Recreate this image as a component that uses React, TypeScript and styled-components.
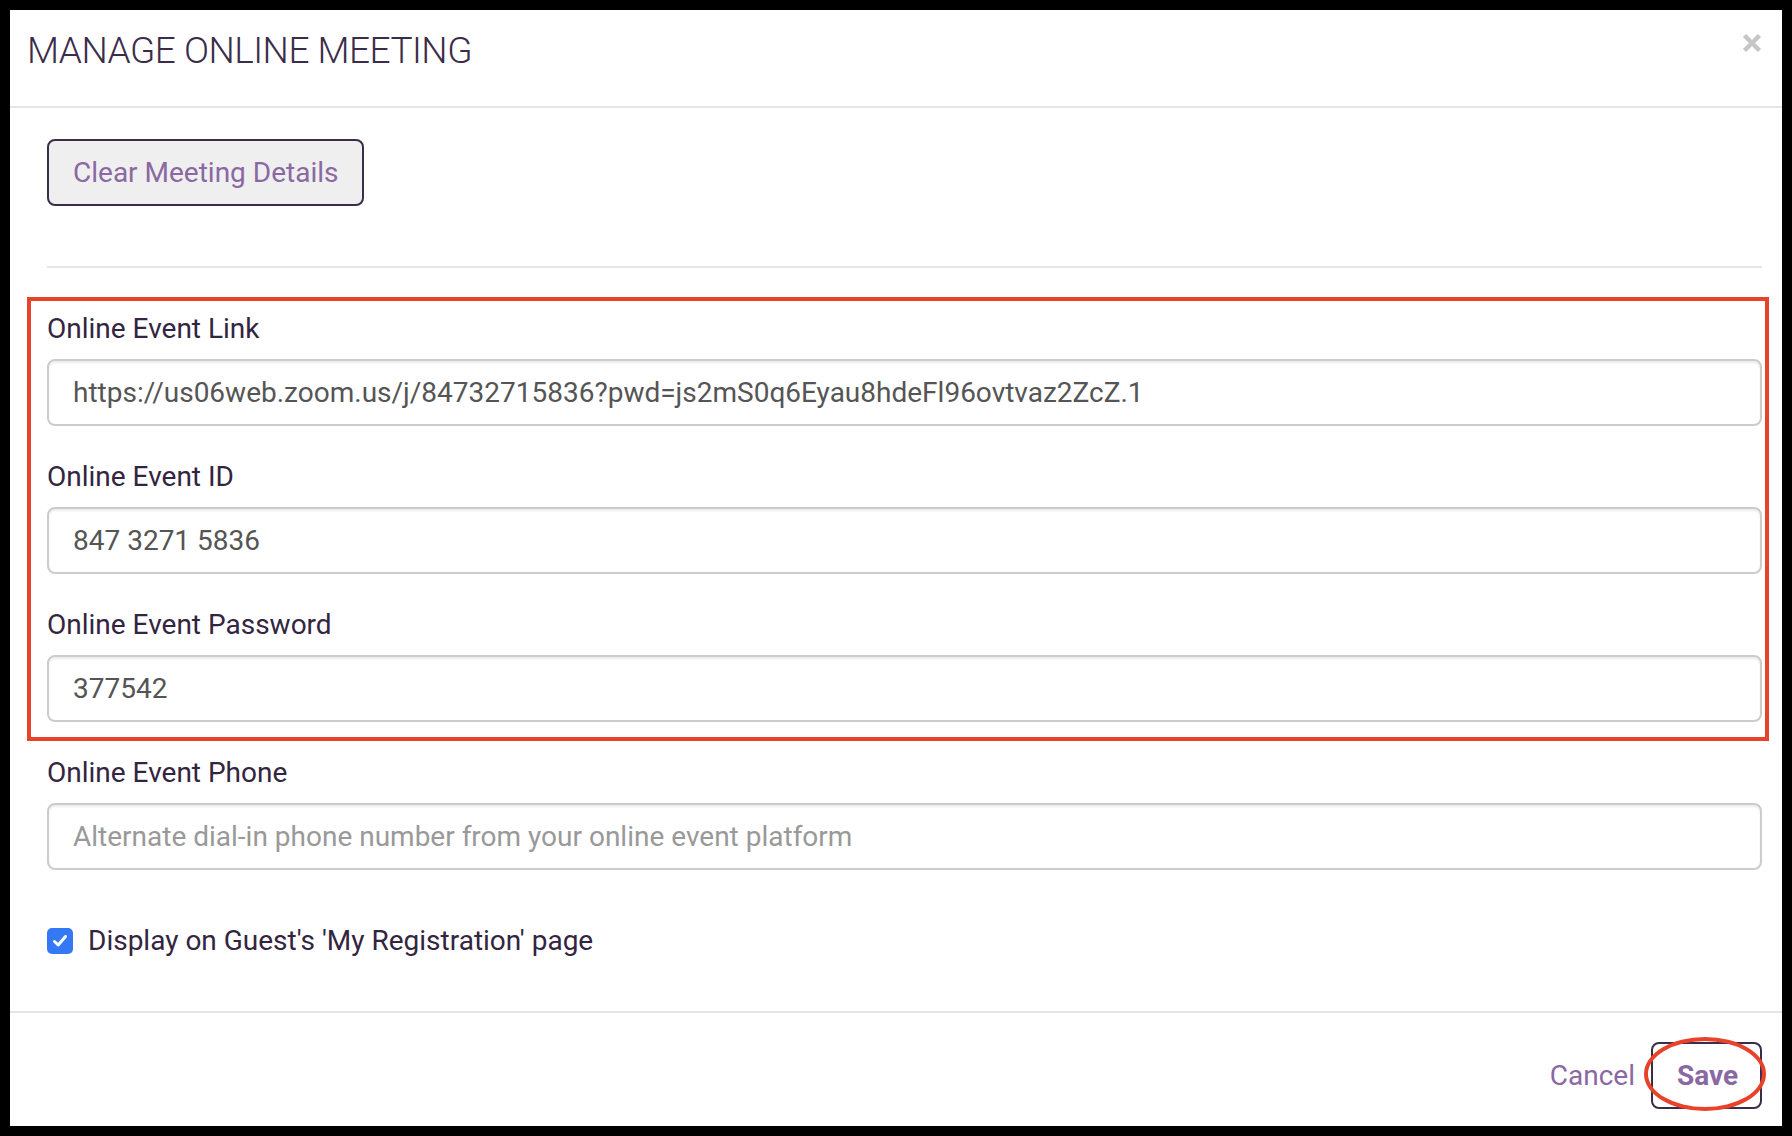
import React from "react";
import styled, { createGlobalStyle } from "styled-components";

const GlobalStyle = createGlobalStyle`
  html, body { margin: 0; padding: 0; background: #000; }
  body { font-family: Roboto, "Liberation Sans", sans-serif; }
  * { box-sizing: border-box; }
`;

const Frame = styled.div`
  width: 1792px;
  height: 1136px;
  padding: 10px;
  background: #000;
`;

const Modal = styled.div`
  width: 100%;
  height: 100%;
  background: #fff;
  display: flex;
  flex-direction: column;
`;

const Header = styled.div`
  height: 98px;
  padding: 21px 20px 0 17px;
  border-bottom: 2px solid #e5e5e5;
  display: flex;
  justify-content: space-between;
  align-items: flex-start;
`;

const Title = styled.h4`
  margin: 0;
  font-size: 37px;
  line-height: 40px;
  font-weight: 300;
  letter-spacing: -0.5px;
  color: #3b2d4a;
`;

const Close = styled.button`
  margin-top: 2px;
  width: 20px;
  height: 20px;
  padding: 0;
  border: 0;
  background: none;
  display: flex;
`;

const Body = styled.div`
  padding: 31px 20px 0 37px;
`;

const OutlineButton = styled.button<{ $bold?: boolean; $width?: number }>`
  height: 67px;
  padding: 0 24px;
  border: 2px solid #3b2d4a;
  border-radius: 8px;
  background: ${(p) => (p.$bold ? "#fff" : "#efefef")};
  color: #8a69a3;
  font-family: Roboto, sans-serif;
  font-size: 28px;
  font-weight: ${(p) => (p.$bold ? 700 : 400)};
  ${(p) => (p.$width ? `width: ${p.$width}px;` : "")}
  position: relative;
`;

const Divider = styled.hr`
  margin: 60px 0 0;
  border: 0;
  height: 2px;
  background: #e5e5e5;
`;

const Highlighted = styled.div`
  position: relative;
  margin-top: 41px;
  margin-bottom: 31px;
`;

const RedBox = styled.div`
  position: absolute;
  top: -12px;
  left: -20px;
  right: -7px;
  bottom: -19px;
  border: 4px solid #e8432a;
  pointer-events: none;
`;

const Field = styled.div<{ $last?: boolean }>`
  margin-bottom: ${(p) => (p.$last ? 0 : 31)}px;
`;

const Label = styled.label`
  display: block;
  font-size: 28px;
  line-height: 40px;
  font-weight: 400;
  color: #33253f;
  margin-bottom: 10px;
`;

const Input = styled.input`
  display: block;
  width: 100%;
  height: 67px;
  padding: 0 24px;
  border: 2px solid #cccccc;
  border-radius: 8px;
  box-shadow: inset 0 2px 2px rgba(0, 0, 0, 0.075);
  font-family: Roboto, sans-serif;
  font-size: 28px;
  color: #555;
  background: #fff;
  outline: none;
  &::placeholder { color: #999; }
`;

const CheckRow = styled.label`
  margin-top: 51px;
  display: flex;
  align-items: center;
  gap: 15px;
  font-size: 28px;
  line-height: 40px;
  color: #33253f;
`;

const CheckBox = styled.span`
  width: 26px;
  height: 26px;
  border-radius: 5px;
  background: #3478f6;
  display: flex;
  align-items: center;
  justify-content: center;
`;

const Footer = styled.div`
  margin-top: auto;
  height: 115px;
  border-top: 2px solid #e5e5e5;
  padding: 29px 20px 0;
  display: flex;
  justify-content: flex-end;
  align-items: flex-start;
`;

const LinkButton = styled.button`
  height: 66px;
  padding: 0;
  margin-right: 16px;
  border: 0;
  background: none;
  color: #8a69a3;
  font-family: Roboto, sans-serif;
  font-size: 28px;
`;

const Ellipse = styled.span`
  position: absolute;
  top: -7px;
  bottom: -4px;
  left: -9px;
  right: -6px;
  border: 4px solid #e8432a;
  border-radius: 50%;
  pointer-events: none;
`;

const fields = [
  { label: "Online Event Link", value: "https://us06web.zoom.us/j/84732715836?pwd=js2mS0q6Eyau8hdeFl96ovtvaz2ZcZ.1" },
  { label: "Online Event ID", value: "847 3271 5836" },
  { label: "Online Event Password", value: "377542" },
];

export default function App() {
  return (
    <>
      <GlobalStyle />
      <Frame>
        <Modal>
          <Header>
            <Title>MANAGE ONLINE MEETING</Title>
            <Close aria-label="Close">
              <svg width="20" height="20" viewBox="0 0 20 20">
                <path d="M2.5 2.5 L17.5 17.5 M17.5 2.5 L2.5 17.5" stroke="#c6c6c6" strokeWidth="4.5" />
              </svg>
            </Close>
          </Header>
          <Body>
            <OutlineButton>Clear Meeting Details</OutlineButton>
            <Divider />
            <Highlighted>
              {fields.map((f, i) => (
                <Field key={f.label} $last={i === fields.length - 1}>
                  <Label>{f.label}</Label>
                  <Input defaultValue={f.value} readOnly />
                </Field>
              ))}
              <RedBox />
            </Highlighted>
            <Field $last>
              <Label>Online Event Phone</Label>
              <Input placeholder="Alternate dial-in phone number from your online event platform" />
            </Field>
            <CheckRow>
              <CheckBox>
                <svg width="18" height="18" viewBox="0 0 18 18">
                  <path d="M3.5 9.5 L7.2 13 L14.5 4.5" fill="none" stroke="#fff" strokeWidth="3" strokeLinecap="round" strokeLinejoin="round" />
                </svg>
              </CheckBox>
              Display on Guest's 'My Registration' page
            </CheckRow>
          </Body>
          <Footer>
            <LinkButton>Cancel</LinkButton>
            <OutlineButton $bold $width={111}>
              Save
              <Ellipse />
            </OutlineButton>
          </Footer>
        </Modal>
      </Frame>
    </>
  );
}
